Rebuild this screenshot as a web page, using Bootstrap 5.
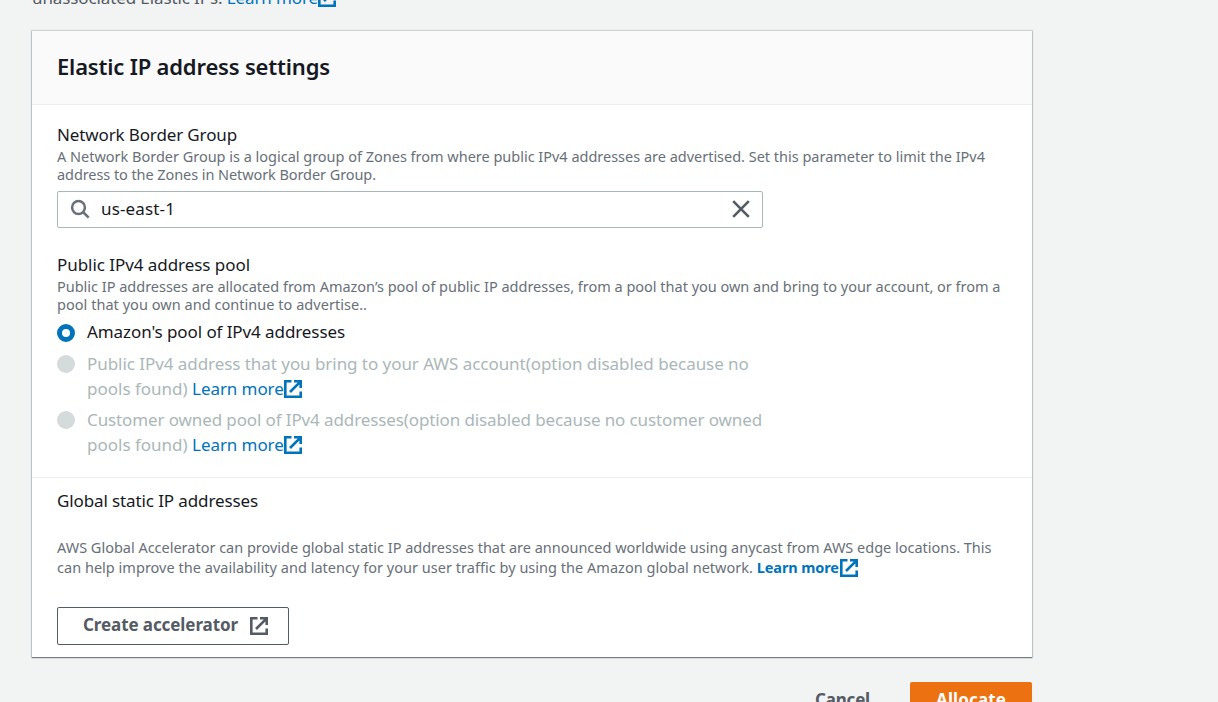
<!DOCTYPE html>
<html lang="en">
<head>
<meta charset="utf-8">
<meta name="viewport" content="width=device-width, initial-scale=1">
<title>Allocate Elastic IP address</title>
<link href="https://cdn.jsdelivr.net/npm/bootstrap@5.3.0/dist/css/bootstrap.min.css" rel="stylesheet">
<style>
body{font-family:"Noto Sans","Open Sans",sans-serif;font-size:17px;line-height:25px;color:#16191f;background:#f2f3f3;height:702px;overflow:hidden}
.page-col{width:1000px;margin-left:32px;display:flow-root}
.intro{color:#545b64;margin-top:-15px;margin-bottom:21px;letter-spacing:-.112px}
a{color:#0073bb;text-decoration:none}
.panel{border:0;border-radius:0;height:626px;box-shadow:0 0 1px 1px rgba(0,28,36,.15),0 1px 1px 0 rgba(0,28,36,.45);color:#16191f}
.panel-head{height:74px;background:#fafafa;border-bottom:1px solid #eaeded;padding:21px 25px 0}
.panel-head h2{font-size:22px;line-height:28px;font-weight:600;letter-spacing:-.178px}
.panel-main{padding:17px 25px 0}
.ln{white-space:nowrap;display:block}
.desc{font-size:14.5px;line-height:18px;color:#687078}
.desc.tall{line-height:20px;margin-top:24px}
.search{width:706px;height:37px;border:1px solid #aab7b8;border-radius:2px;margin-top:8px;padding:0 11px 2px 12px}
.search span{margin-left:11px}
.choice{display:flex;gap:12px;margin-top:6px}
.choice.on{margin-bottom:7px}
.dot{width:18px;height:18px;border-radius:50%;background:#d5dbdb;margin-top:4px;flex:none}
.on .dot{background:#fff;border:5.5px solid #0073bb;margin-top:5px}
.off{color:#aab7b8}
.off a{letter-spacing:-.08px}
.on + .off{margin-top:0}
.split{border-top:1px solid #eaeded;margin-top:20px;padding:10px 25px 0}
.ext{vertical-align:-3px}
.desc .ext{margin-left:1px;vertical-align:-4px}
.btn{border-radius:2px;font-size:17px;line-height:25px;font-weight:700;padding:0 0 3px;height:38px}
.btn-make{width:232px;border:1px solid #545b64;color:#545b64;margin-top:30px;padding:0 0 4px 5px;letter-spacing:-.089px}
.btn-make .ext{margin-left:12px;vertical-align:-4px}
.btn-go{width:122px;background:#ec7211;color:#fff;letter-spacing:.123px}
.btn-quit{color:#545b64;letter-spacing:-.19px}
.actions{column-gap:40px;padding-top:25px}
.k0{letter-spacing:-.012px}.k1{letter-spacing:-.131px}.k2{letter-spacing:-.077px}.k3{letter-spacing:.141px}
.k4{letter-spacing:-.053px}.k5{letter-spacing:.036px}.k6{letter-spacing:-.088px}.k7{letter-spacing:-.114px}.k8{letter-spacing:.023px}
</style>
<script src="https://cdn.jsdelivr.net/npm/bootstrap@5.3.0/dist/js/bootstrap.bundle.min.js"></script>
</head>
<body>
<svg width="0" height="0" class="position-absolute"><symbol id="ext" viewBox="0 0 18 18"><path d="M7.5 1.3H1.3v15.4h15.4V11.5M10 1.3h6.7V8M16.2 1.8L6 12" fill="none" stroke="currentColor" stroke-width="2.6"/></symbol></svg>
<main class="page-col">
  <div class="intro ln">unassociated Elastic IPs. <a href="#">Learn more<svg class="ext" width="18" height="18"><use href="#ext"/></svg></a></div>
  <section class="card panel">
    <div class="panel-head"><h2 class="m-0 ln">Elastic IP address settings</h2></div>
    <div class="panel-main">
      <div class="ln k1">Network Border Group</div>
      <div class="desc">
        <span class="ln k0">A Network Border Group is a logical group of Zones from where public IPv4 addresses are advertised. Set this parameter to limit the IPv4</span>
        <span class="ln k2">address to the Zones in Network Border Group.</span>
      </div>
      <div class="search d-flex align-items-center">
        <svg width="20" height="20" fill="none" stroke="#687078" stroke-width="2.5"><circle cx="8.5" cy="8.5" r="6.4"/><path d="M13 13l5.7 5.7"/></svg>
        <span class="ln k3">us-east-1</span>
        <svg class="ms-auto" width="20" height="20" stroke="#545b64" stroke-width="2.6"><path d="M2.2 2.2l15.6 15.6M17.8 2.2L2.2 17.8"/></svg>
      </div>
      <div class="ln mt-4 k4">Public IPv4 address pool</div>
      <div class="desc">
        <span class="ln k0">Public IP addresses are allocated from Amazon’s pool of public IP addresses, from a pool that you own and bring to your account, or from a</span>
        <span class="ln k5">pool that you own and continue to advertise..</span>
      </div>
      <div class="choice on"><i class="dot"></i><span class="ln k6">Amazon's pool of IPv4 addresses</span></div>
      <div class="choice off"><i class="dot"></i><div><span class="ln k4">Public IPv4 address that you bring to your AWS account(option disabled because no</span><span class="ln">pools found) <a href="#">Learn more<svg class="ext" width="18" height="18"><use href="#ext"/></svg></a></span></div></div>
      <div class="choice off"><i class="dot"></i><div><span class="ln k7">Customer owned pool of IPv4 addresses(option disabled because no customer owned</span><span class="ln">pools found) <a href="#">Learn more<svg class="ext" width="18" height="18"><use href="#ext"/></svg></a></span></div></div>
    </div>
    <div class="split">
      <div class="ln k7">Global static IP addresses</div>
      <div class="desc tall">
        <span class="ln k0">AWS Global Accelerator can provide global static IP addresses that are announced worldwide using anycast from AWS edge locations. This</span>
        <span class="ln k8">can help improve the availability and latency for your user traffic by using the Amazon global network. <a class="fw-bold k7" href="#">Learn more<svg class="ext" width="18" height="18"><use href="#ext"/></svg></a></span>
      </div>
      <button class="btn btn-make">Create accelerator<svg class="ext" width="18" height="18"><use href="#ext"/></svg></button>
    </div>
  </section>
  <div class="d-flex justify-content-end actions">
    <button class="btn btn-quit border-0">Cancel</button>
    <button class="btn btn-go border-0">Allocate</button>
  </div>
</main>
</body></html>
